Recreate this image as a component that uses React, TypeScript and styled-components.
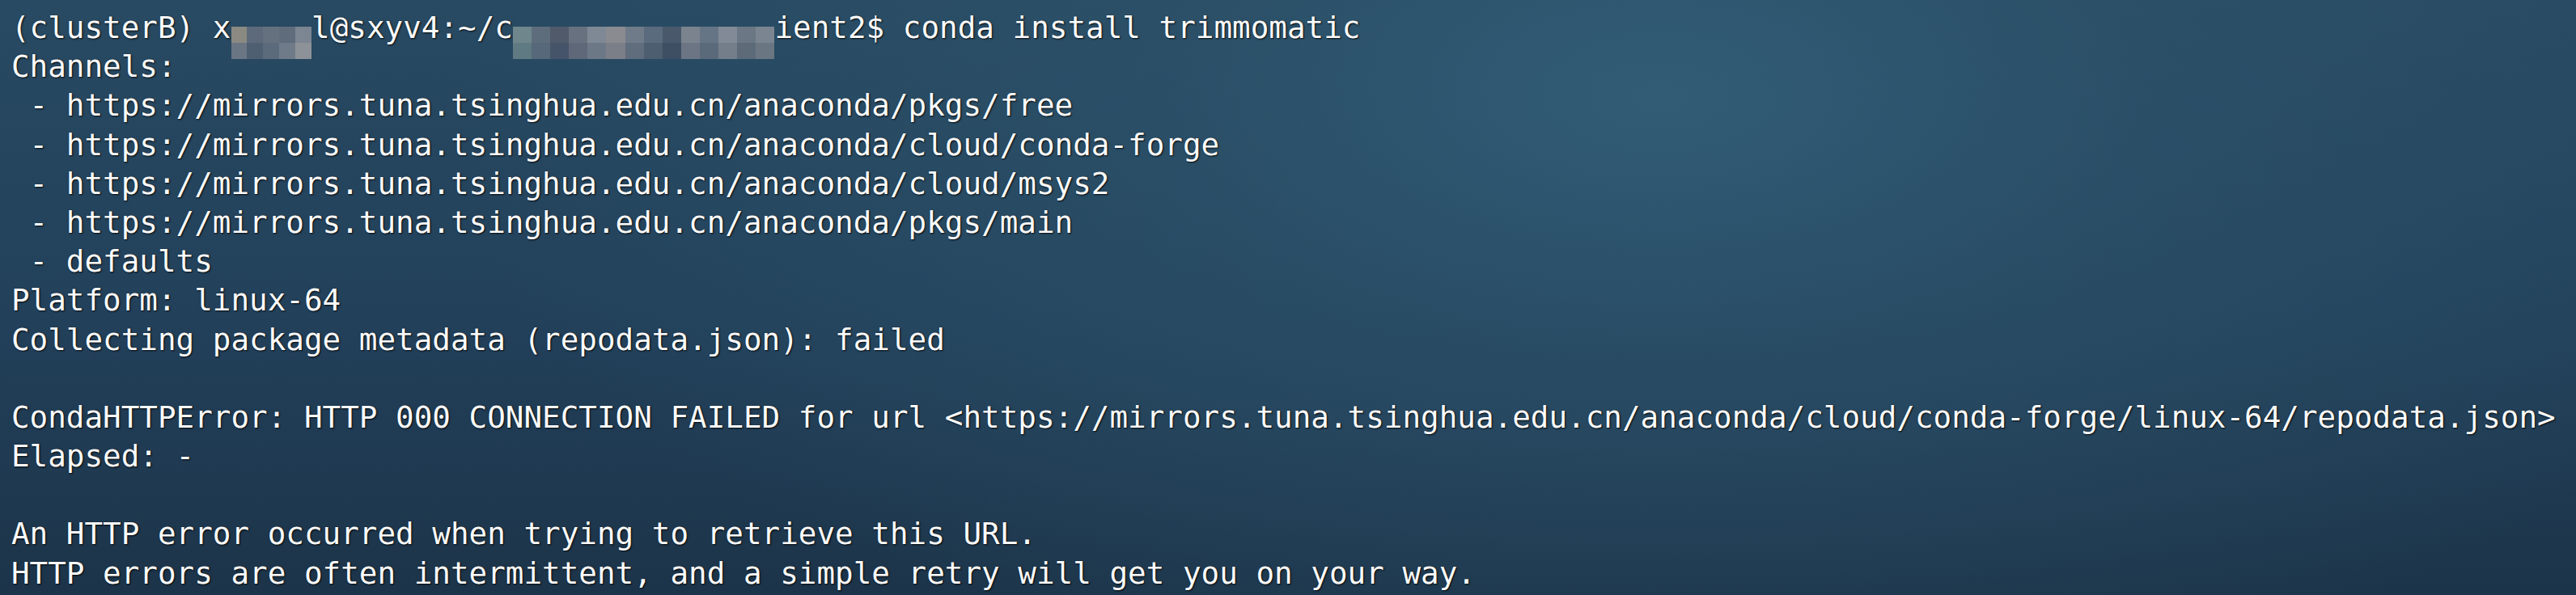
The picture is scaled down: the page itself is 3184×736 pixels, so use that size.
import React from "react";
import styled, { createGlobalStyle } from "styled-components";

const GlobalStyle = createGlobalStyle`
  html, body {
    margin: 0;
    padding: 0;
    width: 3184px;
    height: 736px;
    overflow: hidden;
    background: #1d3549;
  }
`;

const Terminal = styled.div`
  box-sizing: border-box;
  width: 3184px;
  height: 736px;
  padding: 10px 0 0 14px;
  overflow: hidden;
  background:
    radial-gradient(ellipse 1500px 760px at 2050px 120px, rgba(50, 93, 119, 0.95) 0%, rgba(44, 82, 106, 0.7) 40%, rgba(30, 55, 76, 0) 100%),
    linear-gradient(to bottom, #284a62 0%, #22405a 55%, #1c3449 100%);
  font-family: "DejaVu Sans Mono", "Liberation Mono", monospace;
  font-size: 37.6px;
  line-height: 48.2px;
  color: #fbfbfb;
  text-shadow: 1px 1px 2px rgba(0, 0, 0, 0.85), 0 0 1px rgba(0, 0, 0, 0.6);
`;

const Line = styled.div`
  white-space: pre;
  height: 48.2px;
`;

const Mosaic = styled.span<{ $cols: number; $width: number }>`
  display: inline-grid;
  grid-template-columns: repeat(${(p) => p.$cols}, 1fr);
  grid-template-rows: 20px 20px;
  width: ${(p) => p.$width}ch;
  height: 40px;
  vertical-align: -6px;
  text-shadow: none;
`;

const Cell = styled.span<{ $c: string }>`
  background: ${(p) => p.$c};
`;

const userMask = [
  "#8b8a82", "#5d6a7b", "#66717f", "#5f6c7c", "#7c8592",
  "#6a7684", "#4f5f72", "#5b6b7c", "#707b89", "#8d9299",
];

const pathMask = [
  "#6f868c", "#5e6d7b", "#505a6a", "#67717f", "#7e8995", "#8a8b90", "#6f7b89",
  "#5a6b7d", "#4a586b", "#7b838f", "#667585", "#818a96", "#6b7784", "#7a8591",
  "#5f7a82", "#56687a", "#46546a", "#5e6878", "#6d7887", "#7b7f88", "#5f6d7d",
  "#4c5e70", "#3f4f63", "#6c7583", "#5b6a7b", "#747e8b", "#5d6a78", "#6a7682",
];

const lines: string[] = [
  "Channels:",
  " - https://mirrors.tuna.tsinghua.edu.cn/anaconda/pkgs/free",
  " - https://mirrors.tuna.tsinghua.edu.cn/anaconda/cloud/conda-forge",
  " - https://mirrors.tuna.tsinghua.edu.cn/anaconda/cloud/msys2",
  " - https://mirrors.tuna.tsinghua.edu.cn/anaconda/pkgs/main",
  " - defaults",
  "Platform: linux-64",
  "Collecting package metadata (repodata.json): failed",
  "",
  "CondaHTTPError: HTTP 000 CONNECTION FAILED for url <https://mirrors.tuna.tsinghua.edu.cn/anaconda/cloud/conda-forge/linux-64/repodata.json>",
  "Elapsed: -",
  "",
  "An HTTP error occurred when trying to retrieve this URL.",
  "HTTP errors are often intermittent, and a simple retry will get you on your way.",
];

const App: React.FC = () => (
  <>
    <GlobalStyle />
    <Terminal>
      <Line>
        {"(clusterB) x"}
        <Mosaic $cols={5} $width={4.4}>
          {userMask.map((c, i) => (
            <Cell key={i} $c={c} />
          ))}
        </Mosaic>
        {"l@sxyv4:~/c"}
        <Mosaic $cols={14} $width={14.3}>
          {pathMask.map((c, i) => (
            <Cell key={i} $c={c} />
          ))}
        </Mosaic>
        {"ient2$ conda install trimmomatic"}
      </Line>
      {lines.map((text, i) => (
        <Line key={i}>{text}</Line>
      ))}
    </Terminal>
  </>
);

export default App;
